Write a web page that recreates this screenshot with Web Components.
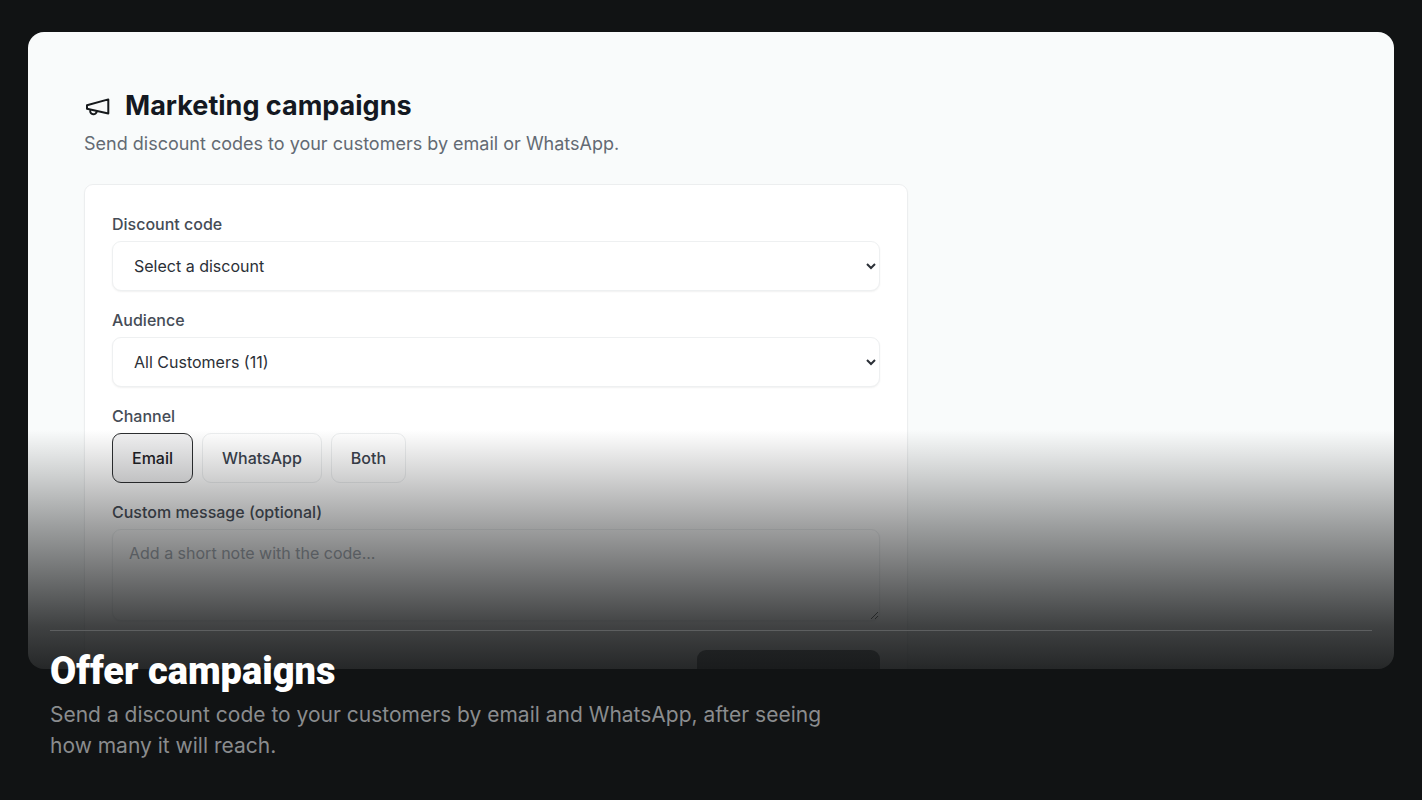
<!DOCTYPE html>
<html lang="en">
<head>
<meta charset="utf-8">
<meta name="viewport" content="width=device-width, initial-scale=1">
<title>Offer campaigns</title>
<style>
  html, body { margin: 0; }
  body { background: #111314; font-family: Inter, "Liberation Sans", sans-serif; }
</style>
</head>
<body>
<feature-tile>
  <campaign-page slot="preview">
    <campaign-form></campaign-form>
  </campaign-page>
  <span slot="title">Offer campaigns</span>
  <span slot="text">Send a discount code to your customers by email and WhatsApp, after seeing how many it will reach.</span>
</feature-tile>

<script>
class BaseElement extends HTMLElement {
  constructor() {
    super();
    this.attachShadow({ mode: 'open' }).innerHTML = this.constructor.markup;
  }
}

/* Dark tile: a clipped preview, a fade over it and a caption on top */
class FeatureTile extends BaseElement {
  static markup = `
    <style>
      :host { display: flex; flex-direction: column; box-sizing: border-box; position: relative;
        min-height: 100vh; padding: 32px 28px 131px; background: #111314; overflow: hidden; }
      .preview { flex: 1 1 0; min-height: 0; overflow: hidden; border-radius: 16px; background: #f9fbfb; }
      .fade { position: absolute; left: 0; right: 0; bottom: 0; height: 370px; pointer-events: none;
        background: linear-gradient(rgba(17,19,20,0), rgba(17,19,20,.19) 46px, rgba(17,19,20,.4) 96px, rgba(17,19,20,.6) 146px, rgba(17,19,20,.8) 196px, rgba(17,19,20,.91) 238px, #111314); }
      .caption { position: absolute; left: 50px; right: 50px; bottom: 39px; border-top: 1px solid #5d5f60; padding-top: 16px; }
      h2 { margin: 0; font: 900 38px/48px Roboto, "Open Sans", sans-serif; color: #fff; }
      p { margin: 4px 0 0; max-width: 800px; font-size: 21px; line-height: 31px; color: #8a8c8e; }
    </style>
    <div class="preview"><slot name="preview"></slot></div>
    <div class="fade"></div>
    <div class="caption">
      <h2><slot name="title"></slot></h2>
      <p><slot name="text"></slot></p>
    </div>`;
}

/* Page shown inside the preview: heading, lead text and a slotted form */
class CampaignPage extends BaseElement {
  static markup = `
    <style>
      :host { display: block; height: 0; padding: 56px; }
      header { display: flex; align-items: center; gap: 14px; }
      svg { width: 27px; height: 27px; flex: none; }
      h1 { margin: 0; font-size: 27px; line-height: 36px; font-weight: 700; color: #141821; }
      p { margin: 6px 0 27px; font-size: 18px; line-height: 27px; color: #636a73; }
    </style>
    <header>
      <svg viewBox="0 0 27 27" fill="none" stroke="#16191c" stroke-width="2" stroke-linejoin="round" stroke-linecap="round" aria-hidden="true">
        <path d="M3 12.200 24.300 6.400V20.600L3 15.800ZM6.200 16.800V17.600A3.300 3.300 0 0 0 12.800 18.300"/>
      </svg>
      <h1>Marketing campaigns</h1>
    </header>
    <p>Send discount codes to your customers by email or WhatsApp.</p>
    <slot></slot>`;
}

class ChannelOption extends BaseElement {
  static markup = `
    <style>
      :host { display: block; }
      button { display: block; box-sizing: border-box; height: 50px; padding: 0 19px; border: 1px solid #eceeef;
        border-radius: 9px; background: #fff; font: 500 16px/24px Inter, "Liberation Sans", sans-serif; color: #3a424d; }
      :host([selected]) button { border-color: #2c2e30; background: #f1f1f2; color: #1d2024; }
    </style>
    <button type="button"><slot></slot></button>`;
}

class CampaignForm extends BaseElement {
  static markup = `
    <style>
      :host { display: block; box-sizing: border-box; max-width: 824px; padding: 27px; background: #fff;
        border: 1px solid #eceeef; border-radius: 9px; box-shadow: 0 1px 2px rgba(0,0,0,.03); }
      form { display: grid; gap: 17px; }
      .field { display: grid; gap: 5px; }
      label, .label { font-size: 16px; line-height: 24px; font-weight: 500; color: #454c56; }
      select, textarea { box-sizing: border-box; width: 100%; margin: 0; border: 1px solid #eef0f1; border-radius: 9px;
        background: #fff; box-shadow: 0 1px 2px rgba(0,0,0,.06); font: 400 16px/24px Inter, "Liberation Sans", sans-serif; color: #2b3037; }
      select { height: 50px; padding: 0 1px 0 17px; }
      textarea { display: block; height: 92px; padding: 11px 16px; resize: vertical; }
      textarea::placeholder { color: #a3a9b1; }
      .channels { display: flex; gap: 9px; }
      .send { justify-self: end; width: 183px; height: 50px; margin-top: 12px; border: 0; border-radius: 9px; background: #76787a; }
    </style>
    <form>
      <div class="field">
        <label for="code">Discount code</label>
        <select id="code"><option>Select a discount</option></select>
      </div>
      <div class="field">
        <label for="audience">Audience</label>
        <select id="audience"><option>All Customers (11)</option></select>
      </div>
      <div class="field" role="group" aria-labelledby="channel">
        <span class="label" id="channel">Channel</span>
        <div class="channels">
          <channel-option selected>Email</channel-option>
          <channel-option>WhatsApp</channel-option>
          <channel-option>Both</channel-option>
        </div>
      </div>
      <div class="field">
        <label for="message">Custom message (optional)</label>
        <textarea id="message" placeholder="Add a short note with the code..."></textarea>
      </div>
      <button class="send" type="button" aria-label="Send"></button>
    </form>`;
}

customElements.define('channel-option', ChannelOption);
customElements.define('campaign-form', CampaignForm);
customElements.define('campaign-page', CampaignPage);
customElements.define('feature-tile', FeatureTile);
</script>
</body>
</html>
